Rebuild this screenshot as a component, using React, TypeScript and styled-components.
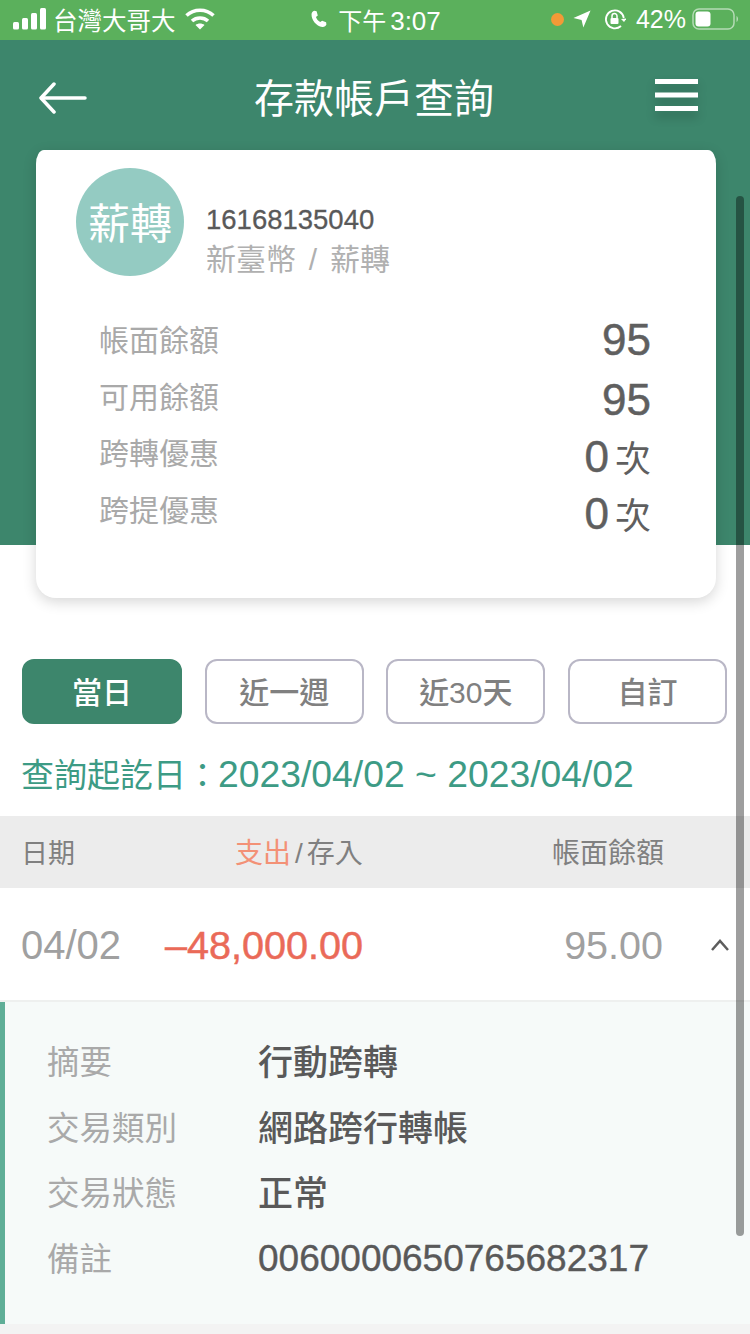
import React from 'react'
import styled, { createGlobalStyle } from 'styled-components'

const GlobalStyle = createGlobalStyle`
  html, body {
    margin: 0;
    padding: 0;
    background: #fff;
  }
  body {
    font-family: "Liberation Sans", "Noto Sans CJK TC", sans-serif;
  }
`

const Page = styled.div`
  position: relative;
  width: 750px;
  height: 1334px;
  overflow: hidden;
  background: #fff;
`
const StatusBar = styled.div`
  height: 40px;
  box-sizing: border-box;
  padding-bottom: 2px;
  background: #5bb05c;
  color: #fff;
  display: grid;
  grid-template-columns: 1fr auto 1fr;
  align-items: center;
  font-size: 24px;
`
const StatusLeft = styled.div`
  display: flex;
  align-items: center;
  padding-left: 13px;
  gap: 6px;
`
const StatusCenter = styled.div`
  display: flex;
  align-items: center;
  gap: 10px;
`
const StatusRight = styled.div`
  display: flex;
  align-items: center;
  justify-content: flex-end;
  padding-right: 12px;
`
const StatusIcon = styled.svg<{ $left?: number }>`
  margin-left: ${p => p.$left || 0}px;
`
const Carrier = styled.span`
  font-size: 24.5px;
  margin-right: 3px;
`
const Clock = styled.span`
  font-size: 24px;
  b {
    font-size: 26px;
    font-weight: 400;
    margin-left: 4px;
  }
`
const Battery = styled.span`
  font-size: 25px;
  margin-left: 10px;
`
const Header = styled.header`
  height: 110px;
  background: #3d866c;
  color: #fff;
  display: flex;
  align-items: center;
  justify-content: space-between;
  padding: 0 52px 0 39px;
  box-sizing: border-box;
`
const BackIcon = styled.svg`
  margin-top: 6px;
`
const Title = styled.h1`
  margin: 2px 0 0 6px;
  font-size: 40px;
  font-weight: 400;
`
const MenuIcon = styled.svg`
  filter: drop-shadow(0 6px 5px rgba(0, 0, 0, 0.22));
`
const Hero = styled.section`
  background: linear-gradient(#3d866c 0, #3d866c 395px, #fff 395px);
  padding: 0 34px 0 36px;
`
const Card = styled.div`
  height: 448px;
  box-sizing: border-box;
  background: #fff;
  border-radius: 8px 8px 20px 20px / 14px 14px 20px 20px;
  box-shadow: 0 4px 14px rgba(0, 0, 0, 0.16);
  padding: 18px 65px 0 40px;
`
const AccountRow = styled.div`
  display: flex;
  align-items: flex-start;
  gap: 22px;
`
const Avatar = styled.div`
  width: 108px;
  height: 108px;
  box-sizing: border-box;
  padding-bottom: 4px;
  border-radius: 50%;
  background: #94cbc2;
  color: #fff;
  font-size: 42px;
  display: flex;
  align-items: center;
  justify-content: center;
`
const AccountText = styled.div`
  padding-top: 33px;
`
const AccountNo = styled.div`
  font-size: 27.5px;
  line-height: 38px;
  color: #595959;
  -webkit-text-stroke: 0.3px #595959;
`
const AccountType = styled.div`
  font-size: 30px;
  line-height: 42px;
  word-spacing: 4.5px;
  color: #b0b0b0;
`
const Balances = styled.div`
  margin-top: 29px;
  padding-left: 23px;
`
const BalanceRow = styled.div`
  height: 56.5px;
  display: flex;
  align-items: center;
  justify-content: space-between;
`
const BalanceLabel = styled.span`
  font-size: 30px;
  color: #a9a9a9;
`
const BalanceValue = styled.span<{ $low?: boolean }>`
  font-size: 44px;
  color: #5f5f5f;
  -webkit-text-stroke: 0.5px #5f5f5f;
  padding-top: ${p => (p.$low ? 10 : 3)}px;
  small {
    font-size: 36px;
    margin-left: 6px;
    -webkit-text-stroke: 0;
  }
`
const Tabs = styled.div`
  margin-top: 61px;
  padding: 0 23px 0 22px;
  display: grid;
  grid-template-columns: 160px repeat(3, 159px);
  justify-content: space-between;
`
const Tab = styled.div<{ $active?: boolean }>`
  height: 65px;
  box-sizing: border-box;
  padding-bottom: 3px;
  border-radius: 12px;
  border: 2px solid ${p => (p.$active ? '#3d866c' : '#b9b7c6')};
  background: ${p => (p.$active ? '#3d866c' : '#fff')};
  color: ${p => (p.$active ? '#fff' : '#808080')};
  font-size: 30px;
  font-weight: 500;
  display: flex;
  align-items: center;
  justify-content: center;
`
const DateRange = styled.div`
  margin-top: 26px;
  padding-left: 21px;
  font-size: 33px;
  line-height: 48px;
  color: #3d9b85;
  display: flex;
  align-items: baseline;
`
const DateValue = styled.span`
  font-size: 37.3px;
  margin-left: -1px;
`
const TableHead = styled.div`
  margin-top: 16px;
  height: 72px;
  box-sizing: border-box;
  padding: 0 86px 2px 21px;
  background: #ececec;
  display: flex;
  align-items: center;
  font-size: 28px;
  color: #808080;
`
const HeadDate = styled.span`
  width: 214px;
  font-size: 27px;
`
const HeadBalance = styled.span`
  margin-left: auto;
`
const Expense = styled.span`
  color: #f39176;
`
const Slash = styled.span`
  margin: 0 4px;
`
const TableRow = styled.div`
  height: 114px;
  box-sizing: border-box;
  border-bottom: 2px solid #eef0ef;
  display: flex;
  align-items: center;
  font-size: 40px;
  padding: 2px 20px 0 21px;
`
const RowDate = styled.span`
  width: 144px;
  color: #a0a0a0;
`
const RowAmount = styled.span`
  font-size: 39.6px;
  color: #ea6a58;
  -webkit-text-stroke: 0.5px #ea6a58;
`
const RowBalance = styled.span`
  margin-left: auto;
  font-size: 39.5px;
  color: #a0a0a0;
`
const Chevron = styled.svg`
  margin-left: 47px;
`
const Detail = styled.div`
  height: 322px;
  box-sizing: border-box;
  background: #f6faf9;
  border-left: 5px solid #5fae97;
  padding: 25px 0 0 42px;
`
const DetailRow = styled.div`
  height: 65.5px;
  display: flex;
  align-items: center;
`
const DetailLabel = styled.span`
  width: 211px;
  font-size: 32.5px;
  color: #a9a9a9;
`
const DetailValue = styled.span<{ $digits?: boolean }>`
  font-size: ${p => (p.$digits ? 37 : 35)}px;
  font-weight: 500;
  color: #595959;
  padding-top: ${p => (p.$digits ? 5 : 0)}px;
  -webkit-text-stroke: ${p => (p.$digits ? '0.4px #595959' : '0')};
`
const BottomStrip = styled.div`
  height: 10px;
  background: #f3f3f3;
`
const Scrollbar = styled.div`
  position: absolute;
  top: 196px;
  right: 6px;
  width: 8px;
  height: 1040px;
  border-radius: 4px;
  background: rgba(0, 0, 0, 0.38);
`

const balances = [
  { label: '帳面餘額', value: '95' },
  { label: '可用餘額', value: '95', low: true },
  { label: '跨轉優惠', value: '0', unit: '次', low: true },
  { label: '跨提優惠', value: '0', unit: '次', low: true },
]
const tabs = ['當日', '近一週', '近30天', '自訂']
const details = [
  { label: '摘要', value: '行動跨轉' },
  { label: '交易類別', value: '網路跨行轉帳' },
  { label: '交易狀態', value: '正常' },
  { label: '備註', value: '0060000650765682317', digits: true },
]

export default function App() {
  return (
    <Page>
      <GlobalStyle />
      <StatusBar>
        <StatusLeft>
          <svg width="34" height="22" viewBox="0 0 34 22" fill="#fff">
            <rect x="0" y="14" width="6" height="7.500" rx="1.500" />
            <rect x="9" y="10" width="6" height="11.500" rx="1.500" />
            <rect x="18" y="5" width="6" height="16.500" rx="1.500" />
            <rect x="27" y="0" width="6" height="21.500" rx="1.500" />
          </svg>
          <Carrier>台灣大哥大</Carrier>
          <svg width="30" height="22" viewBox="0 0 30 22" fill="none" stroke="#fff" strokeWidth="3.600">
            <path d="M1.500 7.500C9 .5 21 .5 28.500 7.500" />
            <path d="M7 13c4.500-4 11.500-4 16 0" />
            <path d="M15 21.500l-4.500-4.500c2.500-2 6.500-2 9 0z" fill="#fff" stroke="none" />
          </svg>
        </StatusLeft>
        <StatusCenter>
          <svg width="19" height="20" viewBox="0 0 24 24" fill="#fff">
            <path d="M6.600 1.500l3 .8 1.500 5.200-2.300 2c.9 2.800 2.700 5 5.400 6.400l2.400-1.800 5 2 .4 3c-.8 2-3 3.400-5.200 3C9 20.800 3 13.500 3.200 6 3.400 3.800 4.700 2.200 6.600 1.500z" />
          </svg>
          <Clock>
            下午<b>3:07</b>
          </Clock>
        </StatusCenter>
        <StatusRight>
          <StatusIcon width="13" height="13" viewBox="0 0 14 14">
            <circle cx="7" cy="7" r="7" fill="#f39a37" />
          </StatusIcon>
          <StatusIcon $left={9} width="18" height="18" viewBox="0 0 20 20" fill="#fff">
            <path d="M19.500 .5L11.500 19.500 9.500 11 .5 9z" />
          </StatusIcon>
          <StatusIcon $left={13} width="22" height="22" viewBox="0 0 22 22" fill="none" stroke="#fff" strokeWidth="1.800">
            <path d="M19.800 10A9 9 0 1 0 17 18" />
            <path d="M17 11l3 3 2.500-3.500z" fill="#fff" stroke="none" />
            <rect x="6.500" y="10" width="8" height="6" rx="1" fill="#fff" stroke="none" />
            <path d="M8 10V8a2.500 2.500 0 0 1 5 0v2" strokeWidth="1.500" />
          </StatusIcon>
          <Battery>42%</Battery>
          <StatusIcon $left={6} width="46" height="22" viewBox="0 0 46 22">
            <rect x="1" y="1" width="41" height="20" rx="6" fill="none" stroke="#fff" strokeOpacity="0.55" strokeWidth="1.500" />
            <rect x="3.500" y="3.500" width="15" height="15" rx="3" fill="#fff" />
            <path d="M44.500 8c1 .5 1.500 1.800 1.500 3s-.5 2.500-1.500 3z" fill="#fff" fillOpacity="0.55" />
          </StatusIcon>
        </StatusRight>
      </StatusBar>
      <Header>
        <BackIcon width="48" height="32" viewBox="0 0 48 32" fill="none" stroke="#fff" strokeWidth="3.500" strokeLinecap="round" strokeLinejoin="round">
          <path d="M46 16H3" />
          <path d="M15 2L2 16l13 14" />
        </BackIcon>
        <Title>存款帳戶查詢</Title>
        <MenuIcon width="43" height="32" viewBox="0 0 43 32" fill="#fff">
          <rect x="0" y="0" width="43" height="5" />
          <rect x="0" y="13.500" width="43" height="5" />
          <rect x="0" y="27" width="43" height="5" />
        </MenuIcon>
      </Header>
      <Hero>
        <Card>
          <AccountRow>
            <Avatar>薪轉</Avatar>
            <AccountText>
              <AccountNo>16168135040</AccountNo>
              <AccountType>新臺幣 / 薪轉</AccountType>
            </AccountText>
          </AccountRow>
          <Balances>
            {balances.map(b => (
              <BalanceRow key={b.label}>
                <BalanceLabel>{b.label}</BalanceLabel>
                <BalanceValue $low={b.low}>
                  {b.value}
                  {b.unit && <small>{b.unit}</small>}
                </BalanceValue>
              </BalanceRow>
            ))}
          </Balances>
        </Card>
      </Hero>
      <Tabs>
        {tabs.map((t, i) => (
          <Tab key={t} $active={i === 0}>
            {t}
          </Tab>
        ))}
      </Tabs>
      <DateRange>
        查詢起訖日：<DateValue>2023/04/02 ~ 2023/04/02</DateValue>
      </DateRange>
      <TableHead>
        <HeadDate>日期</HeadDate>
        <span>
          <Expense>支出</Expense>
          <Slash>/</Slash>存入
        </span>
        <HeadBalance>帳面餘額</HeadBalance>
      </TableHead>
      <TableRow>
        <RowDate>04/02</RowDate>
        <RowAmount>–48,000.00</RowAmount>
        <RowBalance>95.00</RowBalance>
        <Chevron width="20" height="14" viewBox="0 0 20 14" fill="none" stroke="#5d5d5d" strokeWidth="2.500">
          <path d="M2 12l8-9 8 9" />
        </Chevron>
      </TableRow>
      <Detail>
        {details.map(d => (
          <DetailRow key={d.label}>
            <DetailLabel>{d.label}</DetailLabel>
            <DetailValue $digits={d.digits}>{d.value}</DetailValue>
          </DetailRow>
        ))}
      </Detail>
      <BottomStrip />
      <Scrollbar />
    </Page>
  )
}
